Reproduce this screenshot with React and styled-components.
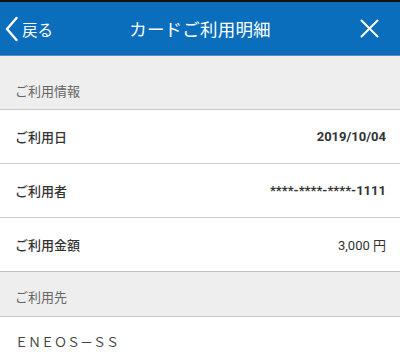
import React from 'react';
import styled, { createGlobalStyle } from 'styled-components';

const GlobalStyle = createGlobalStyle`
  html, body {
    margin: 0;
    padding: 0;
    background: #ffffff;
    font-family: Roboto, "Noto Sans CJK JP", sans-serif;
  }
`;

const Page = styled.div`
  width: 400px;
  border-top: 2px solid #111;
`;

const Header = styled.header`
  height: 53px;
  background: #0a6ebd;
  display: grid;
  grid-template-columns: 80px 1fr 80px;
  align-items: center;
  color: #fff;
  border-bottom: 1px solid #5d8fba;
`;

const BackButton = styled.button`
  display: flex;
  align-items: center;
  gap: 4px;
  background: none;
  border: none;
  color: #fff;
  padding: 0 0 0 5px;
  font-family: "Noto Sans CJK JP", sans-serif;
  font-size: 15.5px;
  cursor: pointer;
`;

const Title = styled.h1`
  margin: 0;
  text-align: center;
  font-family: "Noto Sans CJK JP", sans-serif;
  font-size: 17.5px;
  font-weight: 400;
  letter-spacing: 0.2px;
`;

const CloseButton = styled.button`
  justify-self: end;
  background: none;
  border: none;
  padding: 0 21px 0 0;
  display: flex;
  cursor: pointer;
`;

const SectionHead = styled.div`
  height: ${({ $h }) => $h}px;
  background: #eeeeee;
  border-bottom: 1px solid #c8c8c8;
  display: flex;
  align-items: flex-end;
  padding: 0 0 ${({ $pb }) => $pb}px 15px;
  box-sizing: border-box;
  font-family: "Noto Sans CJK JP", sans-serif;
  font-size: 13px;
  color: #666;
`;

const Row = styled.div`
  height: 53px;
  display: flex;
  align-items: center;
  justify-content: space-between;
  padding: 0 14px 0 15px;
  border-bottom: 1px solid ${({ $last }) => ($last ? '#bdbdbd' : '#cfcfcf')};
`;

const Label = styled.span`
  font-family: "Noto Sans CJK JP", sans-serif;
  font-size: 13px;
  font-weight: 500;
  color: #333;
`;

const Value = styled.span`
  font-family: Roboto, "Noto Sans CJK JP", sans-serif;
  font-size: 13px;
  font-weight: ${({ $bold }) => ($bold ? 700 : 400)};
  color: #333;
`;

const Shop = styled.div`
  height: 48px;
  display: flex;
  align-items: center;
  padding-left: 15px;
  font-family: "Noto Sans CJK JP", sans-serif;
  font-size: 13px;
  color: #444;
`;

const rows = [
  { label: 'ご利用日', value: '2019/10/04', bold: true },
  { label: 'ご利用者', value: '****-****-****-1111', bold: true },
  { label: 'ご利用金額', value: '3,000 円', bold: false },
];

export default function App() {
  return (
    <Page>
      <GlobalStyle />
      <Header>
        <BackButton>
          <svg width="13" height="26" viewBox="0 0 13 26">
            <path d="M11.5 2 L2 13 L11.5 24" fill="none" stroke="#fff" strokeWidth="2.4" strokeLinecap="round" strokeLinejoin="round" />
          </svg>
          戻る
        </BackButton>
        <Title>カードご利用明細</Title>
        <CloseButton>
          <svg width="19" height="19" viewBox="0 0 19 19">
            <path d="M1.5 1.5 L17.5 17.5 M17.5 1.5 L1.5 17.5" stroke="#fff" strokeWidth="2" strokeLinecap="round" />
          </svg>
        </CloseButton>
      </Header>
      <SectionHead $h={54} $pb={9}>ご利用情報</SectionHead>
      {rows.map((r, i) => (
        <Row key={r.label} $last={i === rows.length - 1}>
          <Label>{r.label}</Label>
          <Value $bold={r.bold}>{r.value}</Value>
        </Row>
      ))}
      <SectionHead $h={45} $pb={10}>ご利用先</SectionHead>
      <Shop>ＥＮＥＯＳ－ＳＳ</Shop>
    </Page>
  );
}
